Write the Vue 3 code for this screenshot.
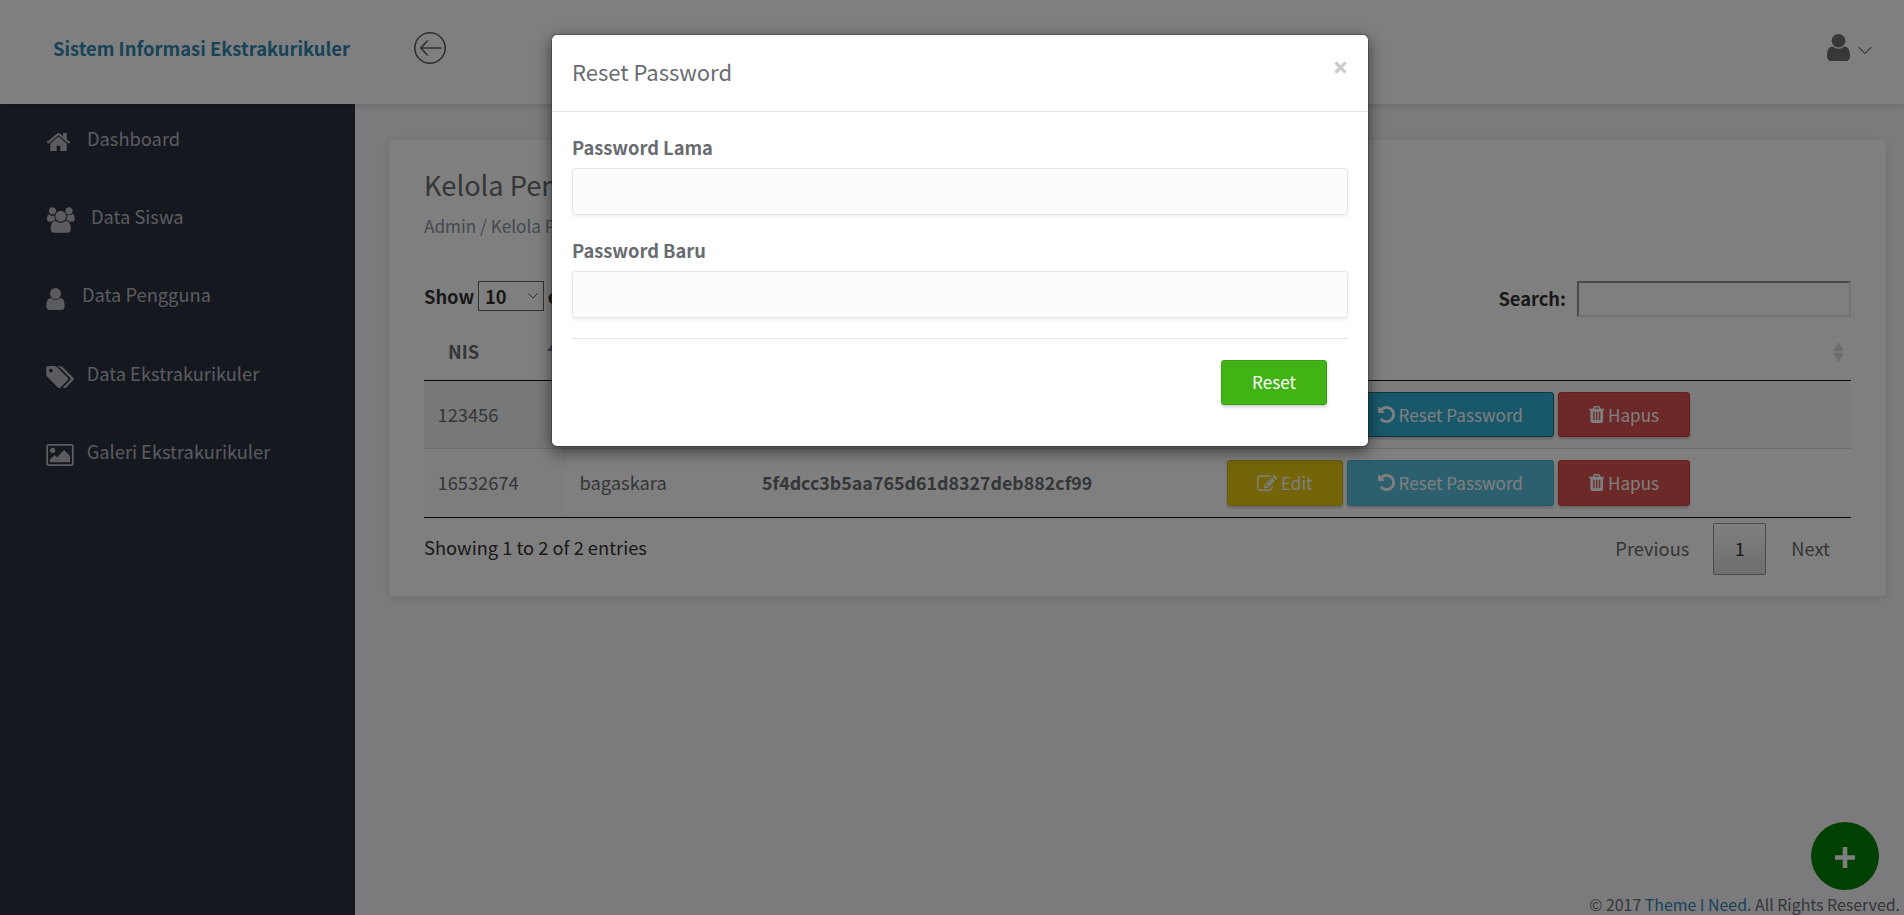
<script setup>
const icons = {
  home: { box: '94 192 1604 1344', d: 'M1472 992v480q0 26-19 45t-45 19h-384v-384h-256v384h-384q-26 0-45-19t-19-45v-480q0-1 .5-3t.5-3l575-474 575 474q1 2 1 6zm223-69l-62 74q-8 9-21 11h-3q-13 0-21-7l-692-577-692 577q-12 8-24 7-13-2-21-11l-62-74q-8-10-7-23.5t11-21.5l719-599q32-26 76-26t76 26l244 204v-195q0-14 9-23t23-9h192q14 0 23 9t9 23v408l219 182q10 8 11 21.5t-7 23.5z' },
  users: { box: '64 0 1920 1792', d: 'M657 896q-162 5-265 128h-134q-82 0-138-40.5t-56-118.5q0-353 124-353 6 0 43.5 21t97.5 42.5 119 21.5q67 0 133-23-5 37-5 66 0 159 86 293zm1071 637q0 120-73 189.5t-194 69.5h-874q-121 0-194-69.5t-73-189.5q0-53 3.5-103.5t14-109 26.5-108.500 43-97.500 62-81 85.500-53.500 111.500-20q10 0 43 21.500t73 48 107 48 135 21.500 135-21.500 107-48 73-48 43-21.500q61 0 111.500 20t85.500 53.500 62 81 43 97.500 26.500 108.500 14 109 3.500 103.500zm-1024-1277q0 106-75 181t-181 75-181-75-75-181 75-181 181-75 181 75 75 181zm704 384q0 159-112.500 271.500t-271.500 112.500-271.500-112.500-112.500-271.500 112.500-271.500 271.500-112.500 271.500 112.500 112.500 271.500zm576 225q0 78-56 118.500t-138 40.500h-134q-103-123-265-128 86-134 86-293 0-29-5-66 66 23 133 23 59 0 119-21.500t97.500-42.500 43.500-21q124 0 124 353zm-128-609q0 106-75 181t-181 75-181-75-75-181 75-181 181-75 181 75 75 181z' },
  user: { box: '256 128 1280 1536', d: 'M1536 1399q0 109-62.5 187t-150.5 78h-854q-88 0-150.5-78t-62.5-187q0-85 8.5-160.5t31.5-152 58.5-131 94-89 134.5-34.5q131 128 313 128t313-128q76 0 134.5 34.5t94 89 58.5 131 31.5 152 8.5 160.5zm-256-887q0 159-112.5 271.5t-271.5 112.5-271.5-112.5-112.5-271.5 112.5-271.5 271.5-112.5 271.5 112.5 112.5 271.5z' },
  tags: { box: '0 128 1899 1515', d: 'M448 448q0-53-37.5-90.5t-90.5-37.5-90.5 37.5-37.5 90.5 37.5 90.5 90.5 37.5 90.5-37.5 37.5-90.5zm1067 576q0 53-37 90l-491 492q-39 37-91 37-53 0-90-37l-715-716q-38-37-64.5-101t-26.5-117v-416q0-52 38-90t90-38h416q53 0 117 26.5t102 64.5l715 714q37 39 37 91zm384 0q0 53-37 90l-491 492q-39 37-91 37-36 0-59-14t-53-45l470-470q37-37 37-90 0-52-37-91l-715-714q-38-38-102-64.5t-117-26.5h224q53 0 117 26.5t102 64.5l715 714q37 39 37 91z' },
  picture: { box: '-64 128 1920 1536', d: 'M576 576q0 80-56 136t-136 56-136-56-56-136 56-136 136-56 136 56 56 136zm1024 384v448h-1408v-192l320-320 160 160 512-512zm96-704h-1600q-13 0-22.5 9.5t-9.5 22.5v1216q0 13 9.5 22.5t22.5 9.5h1600q13 0 22.5-9.5t9.5-22.5v-1216q0-13-9.5-22.5t-22.5-9.5zm160 32v1216q0 66-47 113t-113 47h-1600q-66 0-113-47t-47-113v-1216q0-66 47-113t113-47h1600q66 0 113 47t47 113z' },
  trash: { box: '192 128 1408 1536', d: 'M704 1376v-704q0-14-9-23t-23-9h-64q-14 0-23 9t-9 23v704q0 14 9 23t23 9h64q14 0 23-9t9-23zm256 0v-704q0-14-9-23t-23-9h-64q-14 0-23 9t-9 23v704q0 14 9 23t23 9h64q14 0 23-9t9-23zm256 0v-704q0-14-9-23t-23-9h-64q-14 0-23 9t-9 23v704q0 14 9 23t23 9h64q14 0 23-9t9-23zm-544-992h448l-48-117q-7-9-17-11h-317q-10 2-17 11zm928 32v64q0 14-9 23t-23 9h-96v948q0 83-47 143.5t-113 60.5h-832q-66 0-113-58.5t-47-141.5v-952h-96q-14 0-23-9t-9-23v-64q0-14 9-23t23-9h309l70-167q15-37 54-63t79-26h320q40 0 79 26t54 63l70 167h309q14 0 23 9t9 23z' },
  undo: { box: '128 128 1536 1536', d: 'M1664 896q0 156-61 298t-164 245-245 164-298 61q-172 0-327-72.5t-264-204.5q-7-10-6.5-22.5t8.5-20.5l137-138q10-9 25-9 16 2 23 12 73 95 179 147t225 52q104 0 198.5-40.5t163.5-109.5 109.5-163.5 40.5-198.5-40.5-198.5-109.5-163.5-163.5-109.5-198.5-40.5q-98 0-188 35.5t-160 101.5l137 138q31 30 14 69-17 40-59 40h-448q-26 0-45-19t-19-45v-448q0-42 40-59 39-17 69 14l130 129q107-101 244.5-156.5t284.5-55.5q156 0 298 61t245 164 164 245 61 298z' },
  edit: { box: '0 104 1784 1432', d: 'M888 1184l116-116-152-152-116 116v56h96v96h56zm440-720q-16-16-33 1l-350 350q-17 17-1 33t33-1l350-350q17-17 1-33zm80 594v190q0 119-84.5 203.5t-203.5 84.5h-832q-119 0-203.5-84.5t-84.5-203.5v-832q0-119 84.5-203.5t203.5-84.5h832q63 0 117 25 15 7 18 23 3 17-9 29l-49 49q-14 14-32 8-23-6-45-6h-832q-66 0-113 47t-47 113v832q0 66 47 113t113 47h832q66 0 113-47t47-113v-126q0-13 9-22l64-64q15-15 35-7t20 29zm-96-738l288 288-672 672h-288v-288zm444 132l-92 92-288-288 92-92q28-28 68-28t68 28l152 152q28 28 28 68t-28 68z' }
}
const menu = [
  { icon: 'home', label: 'Dashboard' },
  { icon: 'users', label: 'Data Siswa' },
  { icon: 'user', label: 'Data Pengguna' },
  { icon: 'tags', label: 'Data Ekstrakurikuler' },
  { icon: 'picture', label: 'Galeri Ekstrakurikuler' }
]
const rows = [
  { nis: '123456', name: 'admin', hash: '21232f297a57a5a743894a0e4a801fc3', active: true },
  { nis: '16532674', name: 'bagaskara', hash: '5f4dcc3b5aa765d61d8327deb882cf99', active: false }
]
</script>

<template>
  <div class="page">
    <header class="topbar">
      <div class="brand">Sistem Informasi Ekstrakurikuler</div>
      <svg class="back" viewBox="0 0 32 32"><circle cx="16" cy="16" r="15.200" /><path d="M27.500 16H7M13.800 8.500L6.800 16l7 7.500" /></svg>
      <div class="account">
        <svg class="avatar" :viewBox="icons.user.box" preserveAspectRatio="none"><path :d="icons.user.d" /></svg>
        <svg class="caret" viewBox="0 0 14 9"><path d="M.7 1L7 7.600 13.300 1" /></svg>
      </div>
    </header>

    <div class="body">
      <nav class="sidebar">
        <a v-for="m in menu" :key="m.icon" class="item" :class="m.icon">
          <svg :viewBox="icons[m.icon].box"><path :d="icons[m.icon].d" /></svg>
          <span>{{ m.label }}</span>
        </a>
      </nav>

      <main class="main">
        <section class="card">
          <h1>Kelola Pengguna</h1>
          <p class="crumb">Admin / Kelola Pengguna</p>

          <div class="tools">
            <div class="length">
              Show
              <span class="select">10<svg viewBox="0 0 10 6"><path d="M.5.5L5 5 9.500.5" /></svg></span>
              entries
            </div>
            <div class="search"><span>Search:</span><input type="text" /></div>
          </div>

          <div class="table">
            <div class="row head">
              <div class="th">NIS<i class="asc"></i></div>
              <div class="th">Username</div>
              <div class="th">Password</div>
              <div class="th"><i class="both"></i></div>
            </div>
            <div v-for="r in rows" :key="r.nis" class="row" :class="{ odd: r.active }">
              <div class="td first">{{ r.nis }}</div>
              <div class="td">{{ r.name }}</div>
              <div class="td hash">{{ r.hash }}</div>
              <div class="td actions">
                <button class="btn edit"><svg :viewBox="icons.edit.box"><path :d="icons.edit.d" /></svg>Edit</button>
                <button class="btn info" :class="{ hover: r.active }"><svg :viewBox="icons.undo.box"><path :d="icons.undo.d" /></svg>Reset Password</button>
                <button class="btn danger"><svg :viewBox="icons.trash.box"><path :d="icons.trash.d" /></svg>Hapus</button>
              </div>
            </div>
          </div>

          <div class="foot">
            <div class="summary">Showing 1 to 2 of 2 entries</div>
            <div class="pager"><a class="prev">Previous</a><a class="current">1</a><a class="next">Next</a></div>
          </div>
        </section>
        <footer>© 2017 <a>Theme I Need</a>. All Rights Reserved.</footer>
      </main>
    </div>

    <button class="fab"><svg viewBox="0 0 20 21"><path d="M10 0v21M0 10.500h20" /></svg></button>

    <div class="backdrop">
      <div class="modal">
        <div class="modal-head">
          <h2>Reset Password</h2>
          <svg class="close" viewBox="0 0 12 12"><path d="M1.300 1.300l9.400 9.400M10.700 1.300l-9.400 9.400" /></svg>
        </div>
        <div class="modal-body">
          <label>Password Lama</label>
          <input type="password" />
          <label>Password Baru</label>
          <input type="password" />
          <div class="submit"><button class="btn ok">Reset</button></div>
        </div>
      </div>
    </div>
  </div>
</template>

<style>
html, body { overflow: hidden; }
</style>

<style scoped>
* { box-sizing: border-box; }
.page {
  position: relative;
  height: 915px;
  overflow: hidden;
  display: flex;
  flex-direction: column;
  background: #f6f6fa;
  color: #686c71;
  font-family: "Noto Sans CJK SC", "Noto Sans CJK JP", "Open Sans", sans-serif;
  font-size: 18.300px;
  line-height: 28px;
  white-space: nowrap;
}
.topbar {
  position: relative;
  z-index: 1;
  flex: none;
  height: 104px;
  display: flex;
  align-items: center;
  padding: 0 32px 0 53px;
  background: #fff;
  box-shadow: 0 2px 6px rgba(0, 0, 0, .12);
}
.brand { width: 361px; margin-top: -9px; font-weight: 700; font-size: 18.370px; color: #2f86b0; }
.back { width: 32px; height: 32px; margin-top: -8px; fill: none; stroke: #606060; stroke-width: 1.600; }
.account { margin-left: auto; display: flex; align-items: center; gap: 8px; margin-top: -10px; }
.avatar { width: 23px; height: 27px; fill: #707070; }
.caret { width: 14px; height: 9px; margin-top: 6px; fill: none; stroke: #808080; stroke-width: 1.200; }
.body { flex: 1; display: flex; min-height: 0; }
.sidebar {
  width: 355px;
  flex: none;
  padding: 22px 0 0 44px;
  background: #2b313f;
}
.item { display: flex; align-items: flex-start; height: 78.200px; line-height: 25px; color: #b6b9c0; fill: #b6b9c0; }
.item svg { flex: none; }
.home svg { width: 23px; height: 19.300px; margin: 6px 17px 0 3px; }
.users svg { width: 27.500px; height: 26px; margin: 3px 16.500px 0 3px; }
.user svg { width: 19px; height: 22px; margin: 6px 17px 0 2px; }
.tags svg { width: 28px; height: 22px; margin: 5px 12.500px 0 2.200px; }
.picture svg { width: 28px; height: 22px; margin: 5px 12.500px 0 2.200px; }
.main { flex: 1; display: flex; flex-direction: column; padding: 36px 18px 0 34px; }
.card {
  height: 456px;
  padding: 26px 35px 0;
  border-radius: 4px;
  background: #fff;
  box-shadow: 0 2px 8px rgba(0, 0, 0, .1);
}
h1 { margin: 0; font-size: 27.200px; font-weight: 400; line-height: 36px; }
.crumb { margin: 10px 0 0; font-size: 17.200px; color: #8b93a0; }
.tools { display: flex; justify-content: space-between; margin-top: 41px; height: 55px; color: #333; font-weight: 700; }
.length { display: flex; align-items: center; height: 30px; gap: 3.800px; }
.select { display: flex; align-items: center; justify-content: space-between; width: 66px; height: 30px; padding: 0 5px 0 6px; border: 1px solid #6b6b6b; }
.select svg { width: 10px; height: 6px; fill: none; stroke: #555; stroke-width: 1; }
.search { display: flex; align-items: center; height: 36px; gap: 11px; }
.search span { padding-bottom: 2px; }
.search input { width: 274px; height: 36px; border: 2px solid; border-color: #969696 #e6e6e6 #e6e6e6 #969696; background: #fff; }
.table { border-bottom: 1px solid #111; }
.row { display: grid; grid-template-columns: 142px 182px 465px 1fr; height: 69px; border-top: 1px solid #ddd; }
.row.head { height: 45px; border: 0; border-bottom: 1px solid #111; font-weight: 700; }
.row.odd { height: 67px; border-top: 0; background: #f9f9f9; }
.row .first { background: #fafafa; }
.row.odd .first { background: #f1f1f1; }
.th { display: flex; justify-content: space-between; align-items: center; padding: 0 5px 14px 24px; }
.asc { margin-top: -10px; border: 7px solid transparent; border-top: 0; border-bottom: 9px solid #7c7cc8; }
.both { display: block; width: 11px; height: 20px; margin: 2px 2px 0 auto; background: #d8d8d8; clip-path: polygon(50% 0, 100% 46%, 0 46%, 0 54%, 100% 54%, 50% 100%, 0 54%, 0 46%); }
.td { display: flex; align-items: center; padding: 0 13.500px 2px; }
.hash { font-weight: 700; font-size: 17.820px; padding-left: 14px; }
.actions { gap: 4px; padding-left: 14px; padding-bottom: 0; }
.btn {
  display: flex;
  align-items: center;
  justify-content: center;
  height: 46px;
  padding: 0;
  gap: 3.500px;
  border: 1px solid;
  border-radius: 3px;
  font: 400 17.100px/24px "Noto Sans CJK SC", "Noto Sans CJK JP", sans-serif;
  color: #fff;
  fill: #fff;
  box-shadow: 0 2px 3px rgba(0, 0, 0, .2);
}
.odd .btn, .btn.ok { height: 45px; }
.btn svg { height: 17px; width: 17px; margin-top: -1px; }
.edit { width: 116px; background: #e6ca10; border-color: #d0b80c; }
.btn.edit svg { width: 20px; height: 16px; }
.info { width: 207px; background: #5bc0de; border-color: #46b8da; }
.info.hover { background: #31b0d5; border-color: #1b6d85; }
.danger { width: 132px; background: #d9534f; border-color: #d43f3a; }
.btn.danger svg { width: 15.500px; }
.foot { display: flex; justify-content: space-between; padding-top: 5px; color: #333; }
.summary { padding-top: 10px; }
.pager { display: flex; align-items: center; height: 52px; color: #686868; padding-right: 21px; }
.prev, .next { padding-bottom: 2px; }
.current { width: 53px; height: 52px; margin: 0 25px 0 24px; border: 1px solid #979797; border-radius: 2px; background: linear-gradient(#fff, #dcdcdc); color: #333; text-align: center; line-height: 48px; }
footer { margin: auto -14px 0 0; text-align: right; font-size: 15.900px; line-height: 20px; }
footer a { color: #2f86b0; }
.fab { position: absolute; left: 1811px; top: 822px; width: 68px; height: 68px; border: 0; border-radius: 50%; padding: 0; background: #008000; display: flex; align-items: center; justify-content: center; }
.fab svg { width: 20px; height: 21px; margin-top: 3px; fill: none; stroke: #fff; stroke-width: 4.600; }
.backdrop { position: absolute; inset: 0; z-index: 5; padding-top: 34px; background: rgba(0, 0, 0, .5); }
.modal { width: 818px; height: 413px; margin-left: 551px; border: 1px solid rgba(0, 0, 0, .2); border-radius: 6px; background: #fff; background-clip: padding-box; box-shadow: 0 5px 15px rgba(0, 0, 0, .5); }
.modal-head { display: flex; justify-content: space-between; height: 77px; padding: 20px 21px 0 20px; border-bottom: 1px solid #e5e5e5; }
h2 { margin: 0; font-size: 22px; font-weight: 400; line-height: 32px; }
.close { width: 13px; height: 13px; margin-top: 6px; fill: none; stroke: #ccc; stroke-width: 3; }
.modal-body { padding: 20px 20px 0; }
label { display: block; height: 36px; font-weight: 700; line-height: 30px; }
.modal-body input { display: block; width: 776px; height: 47px; margin-bottom: 20px; border: 1px solid #e6e6e6; border-radius: 3px; background: #fcfcfc; box-shadow: 0 2px 3px rgba(0, 0, 0, .06); }
.submit { border-top: 1px solid #e5e5e5; padding: 21px 21px 0 0; display: flex; justify-content: flex-end; }
.btn.ok { width: 106px; padding-bottom: 1px; background: #41b314; border-color: #3aa010; }
</style>
